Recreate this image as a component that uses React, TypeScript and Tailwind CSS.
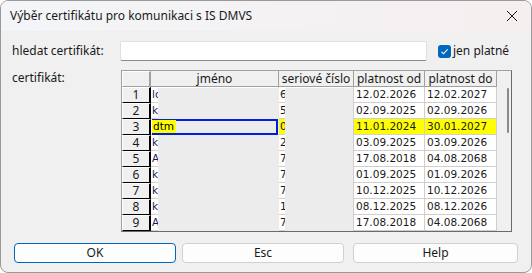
import React from "react";

const rows = [
  { n: "1", name: "lo", sn: "6", od: "12.02.2026", do: "12.02.2027" },
  { n: "2", name: "k", sn: "5", od: "02.09.2025", do: "02.09.2026" },
  { n: "3", name: "dtm", sn: "0", od: "11.01.2024", do: "30.01.2027", sel: true },
  { n: "4", name: "k", sn: "2", od: "03.09.2025", do: "03.09.2026" },
  { n: "5", name: "A", sn: "7", od: "17.08.2018", do: "04.08.2068" },
  { n: "6", name: "k", sn: "7", od: "01.09.2025", do: "01.09.2026" },
  { n: "7", name: "k", sn: "7", od: "10.12.2025", do: "10.12.2026" },
  { n: "8", name: "k", sn: "1", od: "08.12.2025", do: "08.12.2026" },
  { n: "9", name: "A", sn: "7", od: "17.08.2018", do: "04.08.2068" },
];

const ui = { fontFamily: '"Noto Sans", "Open Sans", sans-serif' };
const cell = { fontFamily: '"DejaVu Sans", Verdana, sans-serif' };

export default function App() {
  return (
    <div
      className="w-[532px] h-[273px] overflow-hidden rounded-[8px] border border-[#9a9a9a] bg-[#f0f0f0] text-[#1a1a1a]"
      style={ui}
    >
      {/* title bar */}
      <div className="flex h-[30px] items-center justify-between bg-gradient-to-r from-[#f3f5f8] to-[#f5efef] pl-[9px] pr-[10px]">
        <span className="text-[12px]">Výběr certifikátu pro komunikaci s IS DMVS</span>
        <svg width="12" height="12" viewBox="0 0 12 12" className="mr-[3px]">
          <path d="M1 1l10 10M11 1L1 11" stroke="#1a1a1a" strokeWidth="1" />
        </svg>
      </div>

      <div className="pl-[11px]">
        {/* search row */}
        <div className="mt-[10px] flex h-[20px] items-center">
          <span className="w-[108px] text-[12px] leading-none">hledat certifikát:</span>
          <div className="h-[20px] w-[307px] rounded-[2px] border border-[#e0e0e0] border-b-[#8a8a8a] bg-white" />
          <div className="ml-[11px] flex items-center">
            <div className="flex h-[13px] w-[13px] items-center justify-center rounded-[3px] bg-[#0067c0]">
              <svg width="9" height="9" viewBox="0 0 9 9">
                <path d="M1.5 4.8l2 2L7.6 2.4" fill="none" stroke="white" strokeWidth="1.1" />
              </svg>
            </div>
            <span className="ml-[2px] text-[12px]">jen platné</span>
          </div>
        </div>

        {/* grid row */}
        <div className="mt-[9px] flex">
          <span className="w-[109px] pt-[2px] text-[12px] leading-none">certifikát:</span>
          <div className="relative h-[162px] w-[391px] overflow-hidden border border-[#a0a0a0] border-b-[#6a6a6a] border-r-[#6a6a6a] bg-[#f0f0f0]">
            <div className="flex">
              <div className="w-[376px]">
                {/* header */}
                <div className="flex h-[16px] text-[12px] leading-[15px]">
                  <div className="w-[29px] border-l border-t border-b border-r-2 border-l-white border-t-white border-b-[#a0a0a0] border-r-[#a0a0a0] bg-[#f0f0f0]" />
                  <div className="w-[128px] border-b border-r border-[#a0a0a0] bg-[#f0f0f0] text-center">jméno</div>
                  <div className="w-[75px] border-b border-r border-[#a0a0a0] bg-[#f0f0f0] text-center">seriové číslo</div>
                  <div className="w-[71px] border-b border-r border-[#a0a0a0] bg-[#f0f0f0] text-center">platnost od</div>
                  <div className="w-[72px] border-b border-r border-[#a0a0a0] bg-[#f0f0f0] text-center">platnost do</div>
                </div>
                {rows.map((r) => (
                  <div key={r.n} className="flex h-[16px] text-[10.5px] leading-[15px]" style={cell}>
                    <div
                      className="w-[29px] border-l border-t border-b border-r-2 border-l-white border-t-white border-b-black border-r-black bg-[#f0f0f0] text-center text-[12px] leading-[14px]"
                      style={ui}
                    >
                      {r.n}
                    </div>
                    <div className="w-[128px] overflow-hidden whitespace-nowrap border-b border-r border-[#cfcfcf] bg-white pl-[1px] text-[#1b1b5e]">
                      {r.sel ? (
                        <span className="inline-block h-[14px] border-b-2 border-[#0020e0] bg-[#ffff00] pr-[2px] text-black">{r.name}</span>
                      ) : (
                        r.name
                      )}
                    </div>
                    <div
                      className={`w-[75px] overflow-hidden whitespace-nowrap border-b border-r border-[#cfcfcf] pl-[1px] ${
                        r.sel ? "bg-[#ffff00]" : "bg-white"
                      }`}
                    >
                      {r.sn}
                    </div>
                    <div
                      className={`w-[71px] border-b border-r border-[#cfcfcf] pl-[2px] ${r.sel ? "bg-[#ffff00]" : "bg-white"}`}
                    >
                      {r.od}
                    </div>
                    <div
                      className={`w-[72px] border-b border-r border-[#cfcfcf] pl-[2px] ${r.sel ? "bg-[#ffff00]" : "bg-white"}`}
                    >
                      {r.do}
                    </div>
                  </div>
                ))}
                <div className="flex h-[2px]">
                  <div className="w-[29px] border-r-2 border-black" />
                  <div className="flex-1 bg-white" />
                </div>
              </div>
              {/* scrollbar */}
              <div className="flex w-[13px] justify-end bg-[#f0f0f0] pr-[2px] pt-[17px]">
                <div className="h-[45px] w-[2px] rounded-full bg-[#8a8a8a]" />
              </div>
            </div>
            {/* redaction blocks and focus rectangle drawn over the cells */}
            <div className="absolute left-[36px] top-[17px] h-[145px] w-[121px] bg-[#ececec]" />
            <div className="absolute left-[163px] top-[17px] h-[145px] w-[68px] bg-[#ececec]" />
            <div className="absolute left-[30px] top-[48px] h-[16px] w-[126px] border-2 border-[#0020e0] border-l-[#0020e0]">
              <div className="h-full w-[2px]" />
            </div>
            <div className="absolute left-[30px] top-[49px] text-[10.5px] leading-[13px]" style={cell}>
              <span className="inline-block h-[13px] bg-[#ffff00] pl-[1px] pr-[2px] text-black">dtm</span>
            </div>
          </div>
        </div>

        {/* buttons */}
        <div className="mt-[11px] flex h-[20px] text-[12px]">
          <button className="ml-[2px] h-[20px] w-[162px] rounded-[4px] border border-[#0067c0] bg-[#fdfdfd] leading-none">OK</button>
          <button className="ml-[6px] h-[20px] w-[162px] rounded-[4px] border border-[#d0d0d0] bg-[#fdfdfd] leading-none">Esc</button>
          <button className="ml-[9px] h-[20px] w-[165px] rounded-[4px] border border-[#d0d0d0] bg-[#fdfdfd] leading-none">Help</button>
        </div>
      </div>
    </div>
  );
}
